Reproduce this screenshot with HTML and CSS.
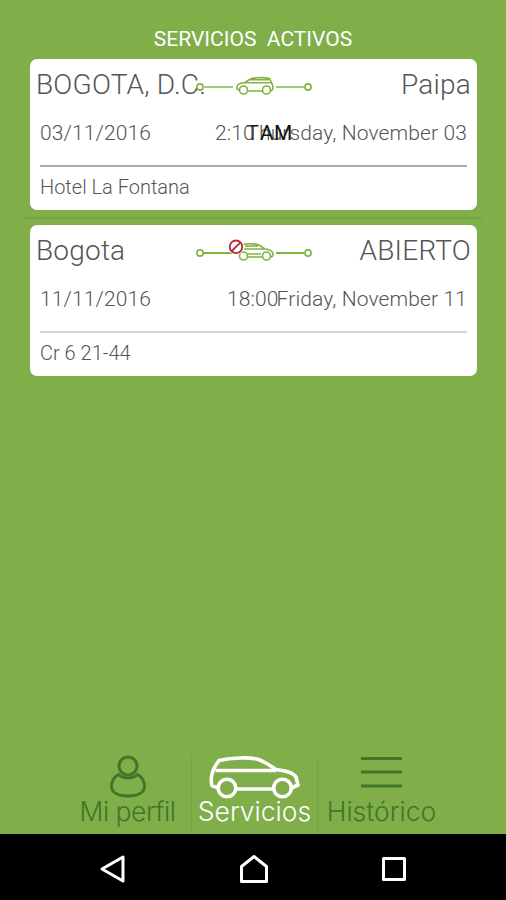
FILE: index.html
```html
<!DOCTYPE html>
<html lang="es">
<head>
	<meta charset="utf-8">
	<title>Servicios activos</title>
	<link rel="stylesheet" href="styles.css">
</head>
<body>
	<h1 class="title">SERVICIOS&nbsp; ACTIVOS</h1>

	<main class="services">
		<article class="card">
			<div class="cities">
				<span>BOGOTA, D.C.</span>
				<span>Paipa</span>
				<svg class="route" viewBox="0 0 120 24" fill="none" stroke="#82b13e" stroke-width="1.6">
					<circle cx="5" cy="12" r="3.1"/>
					<circle cx="113" cy="12" r="3.1"/>
					<path d="M8 12H38M81 12H109" stroke="#a4c978" stroke-width="2"/>
					<path d="M44 15L42 14C41 10 44 8 50 7.500C54 4 57 3 62 2.800C67 2.500 72 2.800 74.500 3.500L77.500 10C78.500 14 77.500 16 75 16M53 16H67M49 7.800H76M55 4.800H74"/>
					<circle cx="48.500" cy="15" r="4"/>
					<circle cx="71.500" cy="15" r="4"/>
				</svg>
			</div>
			<div class="schedule">
				<span class="thursday-date">03/11/2016</span>
				<span class="thursday"><b>T</b>hursday, November 03</span>
				<span class="time morning">2:10 <b>AM</b></span>
			</div>
			<div class="address">Hotel La Fontana</div>
		</article>

		<hr class="divider">

		<article class="card open">
			<div class="cities">
				<span>Bogota</span>
				<span>ABIERTO</span>
				<svg class="route" viewBox="0 0 120 24" fill="none" stroke="#82b13e" stroke-width="1.6">
					<circle cx="5" cy="12" r="3.1"/>
					<circle cx="113" cy="12" r="3.1"/>
					<path d="M8 12H38M81 12H109" stroke-width="2"/>
					<path d="M47 3.500C53 2.500 60 2.500 64 4L70 8C75 8.500 77.500 10 78 12.500C78.500 15 77 16 75 16M53 16H67M49 8H70M50 5H63M53 13H66"/>
					<circle cx="48.500" cy="15" r="4"/>
					<circle cx="71.500" cy="15" r="4"/>
					<circle cx="41" cy="5.800" r="8" fill="#fff" stroke="none"/>
					<circle cx="41" cy="5.800" r="6.300" stroke="#b22c3e" stroke-width="1.800"/>
					<path d="M36.800 10L45.200 1.600" stroke="#b22c3e" stroke-width="1.800"/>
				</svg>
			</div>
			<div class="schedule">
				<span>11/11/2016</span>
				<span>Friday, November 11</span>
				<span class="time">18:00</span>
			</div>
			<div class="address">Cr 6 21-44</div>
		</article>
	</main>

	<nav class="tabs">
		<a class="tab profile">
			<svg width="40" height="46" viewBox="0 0 40 46" fill="none" stroke="#3f762b" stroke-width="3">
				<circle cx="20" cy="11" r="9"/>
				<path d="M10.500 19.500C5.500 22 3.500 27.500 3.500 31C3.500 37.500 10 41 20 41C30 41 36.500 37.500 36.500 31C36.500 27.500 34.500 22 29.500 19.500C25 24 15 24 10.500 19.500Z"/>
			</svg>
			<span>Mi perfil</span>
		</a>
		<a class="tab current">
			<svg width="94" height="46" viewBox="1.5 0 94 46" fill="none" stroke="#fff" stroke-width="3.6" stroke-linejoin="round">
				<path d="M12 33L5.500 30.500C3.500 23 6 14 12.500 5.500C25 2.500 44 2 52 4.500C59 7 64 11 69.500 14.500C80 16 87 17.500 89.500 22L91.500 30L85 33M30 34H66M9 15.500H69.500"/>
				<circle cx="20.500" cy="33" r="8.800"/>
				<circle cx="76" cy="33" r="8.800"/>
			</svg>
			<span>Servicios</span>
		</a>
		<a class="tab history">
			<svg width="42" height="46" viewBox="0.5 0 42 46" stroke="#3f762b" stroke-width="3">
				<path d="M0.500 3.500H41.500M0.500 17H41.500M0.500 31H41.500"/>
			</svg>
			<span>Histórico</span>
		</a>
	</nav>

	<footer class="system-bar">
		<svg width="28" height="30" viewBox="0 0 28 30"><path d="M3 15L24 3V27Z"/></svg>
		<svg width="30" height="30" viewBox="0 0 30 30"><path d="M2.500 27.500V12.500L15 2.500L27.500 12.500V27.500Z"/></svg>
		<svg width="26" height="30" viewBox="0 0 26 30"><path d="M2.500 4.500H23.500V25.500H2.500Z"/></svg>
	</footer>
</body>
</html>
```
FILE: styles.css
```css
* {
	box-sizing: border-box;
}
body {
	display: flex;
	flex-direction: column;
	height: 900px;
	margin: 0;
	overflow: hidden;
	background-color: #80ae49;
	color: #555;
	font-family: Roboto, "Liberation Sans", sans-serif;
}
.title {
	height: 59px;
	margin: 0;
	padding-top: 27px;
	color: #fff;
	font-size: 21px;
	font-weight: 400;
	line-height: 25px;
	text-align: center;
}
.services {
	flex: 1;
	padding: 0 24px;
}
.card {
	height: 151px;
	margin: 0 5px 0 6px;
	padding: 0 10px;
	border-radius: 7px;
	background-color: #fff;
}
.divider {
	height: 2px;
	margin: 7px 0 6px;
	border: none;
	background-color: #76a340;
}
.cities, .schedule {
	display: flex;
	position: relative;
	justify-content: space-between;
	white-space: nowrap;
}
.cities {
	height: 52px;
	margin: 0 -4px;
	font-size: 28px;
	font-weight: 300;
	letter-spacing: 0.2px;
	line-height: 52px;
}
/* route and time lie over the text of their row */
.route {
	position: absolute;
	left: 159px;
	top: 16px;
	width: 120px;
	height: 24px;
	overflow: visible;
}
.schedule {
	height: 56px;
	border-bottom: 2px solid #aaa;
	font-size: 21px;
	font-weight: 300;
	letter-spacing: 0.12px;
	line-height: 45px;
}
.schedule b {
	color: #111;
	font-weight: 400;
}
.open .schedule {
	border-color: #d8d6d3;
}
.thursday {
	letter-spacing: 0.12px;
}
.time {
	position: absolute;
	left: 187px;
}
.morning {
	left: 175px;
}
.address {
	font-size: 20px;
	font-weight: 300;
	line-height: 41px;
}
.tabs {
	display: grid;
	grid-template-columns: 127px 127px 127px;
	justify-content: center;
	height: 79px;
	padding-left: 3px;
	color: #3f762b;
	font-family: Inter, "Liberation Sans", sans-serif;
	font-size: 26.500px;
	font-weight: 300;
}
.tab {
	display: flex;
	flex-direction: column;
	align-items: center;
	line-height: 21px;
	white-space: nowrap;
}
.profile {
	letter-spacing: -0.5px;
}
.current {
	border: solid #76a546;
	border-width: 0 1px;
	color: #fff;
}
.system-bar {
	display: flex;
	justify-content: center;
	gap: 112px;
	height: 66px;
	padding-top: 20px;
	background-color: #000;
}
.system-bar path {
	fill: none;
	stroke: #fff;
	stroke-width: 3;
	stroke-linejoin: round;
}
```
